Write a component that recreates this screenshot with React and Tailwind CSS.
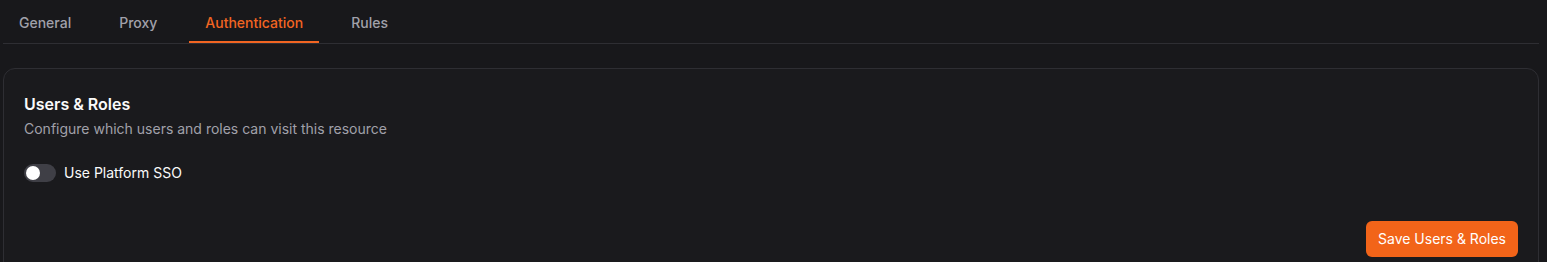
export default function App() {
  const tabs = ["General", "Proxy", "Authentication", "Rules"];
  return (
    <div
      className="w-[1547px] h-[262px] overflow-hidden bg-[#18181b] px-[3px] pr-[8px]"
      style={{ fontFamily: "Inter, 'Noto Sans', sans-serif" }}
    >
      <div className="flex gap-4 border-b border-[#2e2e33] h-[44px]">
        {tabs.map((t) => (
          <div
            key={t}
            className={
              "px-4 pt-1 flex items-center text-sm font-medium h-full border-b-2 -mb-px " +
              (t === "Authentication"
                ? "text-[#f26522] border-[#f26522]"
                : "text-[#a1a1aa] border-transparent")
            }
          >
            {t}
          </div>
        ))}
      </div>
      <div className="mt-6 rounded-xl border border-[#2e2e33] bg-[#1a1a1d] p-5 pt-[23px] h-[220px]">
        <div className="text-[#fafafa] text-base font-semibold leading-6">Users &amp; Roles</div>
        <div className="text-[#a1a1aa] text-sm leading-5 mt-[3px]">
          Configure which users and roles can visit this resource
        </div>
        <div className="flex items-center gap-2 mt-[24px]">
          <div className="w-8 h-[18px] rounded-full bg-[#3f3f46] flex items-center px-[2px]">
            <div className="w-[14px] h-[14px] rounded-full bg-white" />
          </div>
          <span className="text-sm text-[#fafafa]">Use Platform SSO</span>
        </div>
        <div className="flex justify-end mt-[38px]">
          <button className="h-9 px-3 rounded-md bg-[#f26419] text-white text-sm">
            Save Users &amp; Roles
          </button>
        </div>
      </div>
    </div>
  );
}
